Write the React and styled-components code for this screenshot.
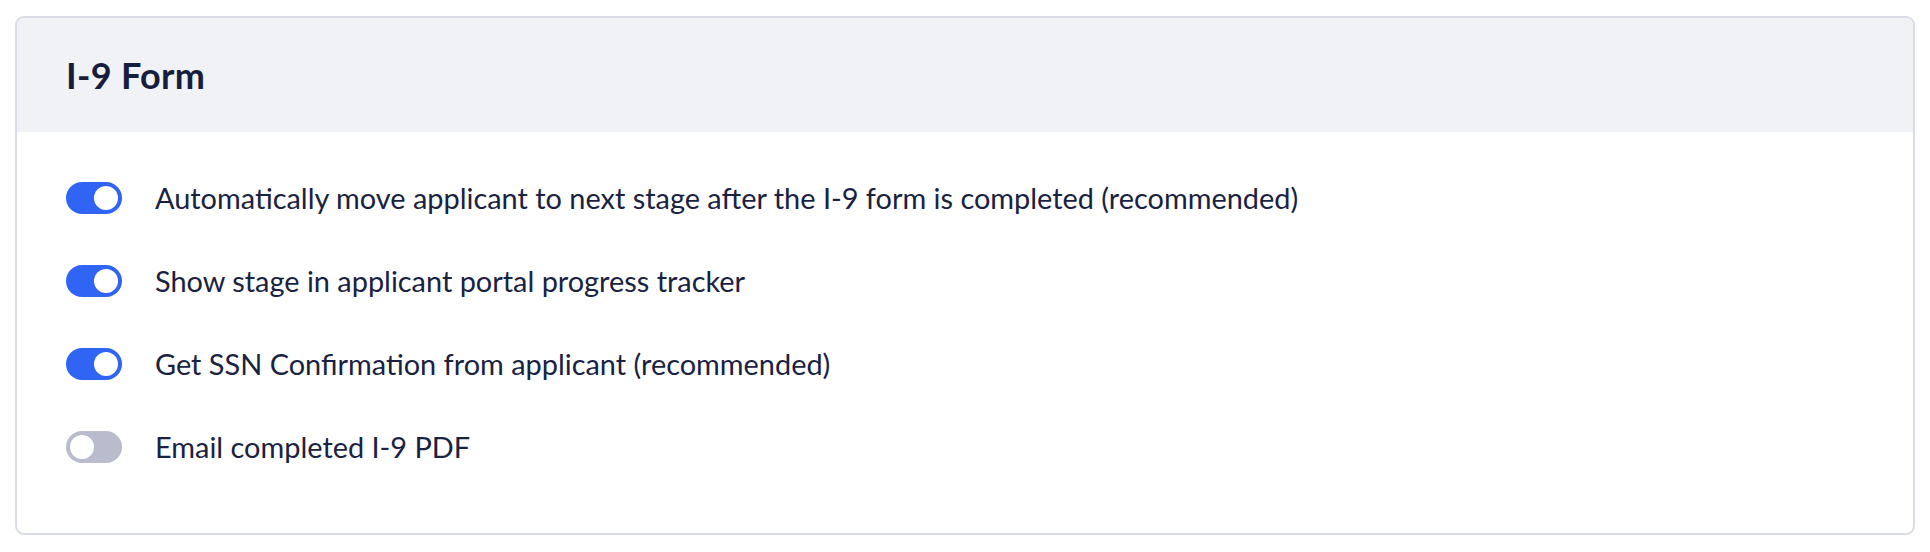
import React, { useState } from "react";
import styled, { createGlobalStyle } from "styled-components";

const GlobalStyle = createGlobalStyle`
  body {
    margin: 0;
    background: #ffffff;
    font-family: Lato, "Noto Sans", sans-serif;
    color: #18203f;
  }
`;

const Card = styled.section`
  margin: 16px 15px 0 15px;
  border: 2px solid #d9dce6;
  border-radius: 9px;
  overflow: hidden;
  background: #ffffff;
`;

const Header = styled.header`
  height: 114px;
  background: #f1f2f6;
  display: flex;
  align-items: center;
  padding: 0 49px;
`;

const Title = styled.h2`
  margin: 0;
  font-size: 36px;
  font-weight: 700;
  color: #161d3d;
  letter-spacing: 0.3px;
`;

const Body = styled.div`
  display: flex;
  flex-direction: column;
  gap: 51px;
  padding: 50px 49px 70px;
`;

const Row = styled.label`
  display: flex;
  align-items: center;
  gap: 33px;
  cursor: pointer;
`;

const Track = styled.span`
  position: relative;
  flex: none;
  width: 56px;
  height: 32px;
  border-radius: 16px;
  background: ${(p) => (p.$on ? "#2f64f5" : "#b9bccc")};
`;

const Knob = styled.span`
  position: absolute;
  top: 4px;
  left: ${(p) => (p.$on ? "28px" : "4px")};
  width: 24px;
  height: 24px;
  border-radius: 50%;
  background: #ffffff;
`;

const Label = styled.span`
  font-size: 28.9px;
  line-height: 32px;
  color: #1a2242;
`;

const options = [
  { id: "auto", text: "Automatically move applicant to next stage after the I-9 form is completed (recommended)", on: true },
  { id: "tracker", text: "Show stage in applicant portal progress tracker", on: true },
  { id: "ssn", text: "Get SSN Confirmation from applicant (recommended)", on: true },
  { id: "email", text: "Email completed I-9 PDF", on: false },
];

const Toggle = ({ on, onClick }) => (
  <Track $on={on} onClick={onClick}>
    <Knob $on={on} />
  </Track>
);

const App = () => {
  const [state, setState] = useState(
    Object.fromEntries(options.map((o) => [o.id, o.on]))
  );

  return (
    <>
      <GlobalStyle />
      <Card>
        <Header>
          <Title>I-9 Form</Title>
        </Header>
        <Body>
          {options.map((o) => (
            <Row key={o.id}>
              <Toggle
                on={state[o.id]}
                onClick={() => setState((s) => ({ ...s, [o.id]: !s[o.id] }))}
              />
              <Label>{o.text}</Label>
            </Row>
          ))}
        </Body>
      </Card>
    </>
  );
};

export default App;
